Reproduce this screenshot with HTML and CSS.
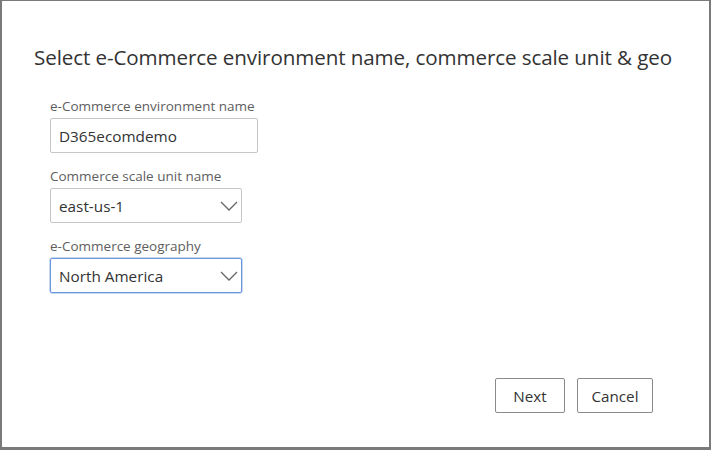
FILE: index.html
```html
<!DOCTYPE html>
<html>
<head>
<meta charset="utf-8">
<link rel="stylesheet" href="styles.css">
</head>
<body>
<div class="frame">
  <h1 class="title">Select e-Commerce environment name, commerce scale unit &amp; geo</h1>
  <div class="form">
    <div class="field">
      <label class="label">e-Commerce environment name</label>
      <div class="input wide">D365ecomdemo</div>
    </div>
    <div class="field">
      <label class="label">Commerce scale unit name</label>
      <div class="input select">
        <span>east-us-1</span>
        <svg class="chev" width="18" height="10" viewBox="0 0 18 10"><path d="M1 1 L9 9 L17 1" fill="none" stroke="#666" stroke-width="1.3"/></svg>
      </div>
    </div>
    <div class="field">
      <label class="label">e-Commerce geography</label>
      <div class="input select focused">
        <span>North America</span>
        <svg class="chev" width="18" height="10" viewBox="0 0 18 10"><path d="M1 1 L9 9 L17 1" fill="none" stroke="#666" stroke-width="1.3"/></svg>
      </div>
    </div>
  </div>
  <div class="actions">
    <button class="btn next">Next</button>
    <button class="btn cancel">Cancel</button>
  </div>
</div>
</body>
</html>
```
FILE: styles.css
```css
html, body {
  margin: 0;
  padding: 0;
  background: #fff;
}
body {
  width: 711px;
  height: 450px;
  overflow: hidden;
  font-family: "Open Sans", "Noto Sans", sans-serif;
}
.frame {
  box-sizing: border-box;
  width: 711px;
  height: 450px;
  border-top: 1px solid #7a7a7a;
  border-left: 2px solid #7a7a7a;
  border-right: 2px solid #7a7a7a;
  border-bottom: 3px solid #7a7a7a;
  display: flex;
  flex-direction: column;
  padding: 0 0 0 32px;
}
.title {
  margin: 42px 0 0 0;
  font-size: 20.6px;
  font-weight: 400;
  color: #333;
  line-height: 28px;
  letter-spacing: -0.1px;
}
.form {
  margin-top: 27px;
  padding-left: 16px;
  display: flex;
  flex-direction: column;
  gap: 15px;
}
.field {
  display: flex;
  flex-direction: column;
  gap: 3px;
}
.label {
  font-size: 13.5px;
  color: #5e5e5e;
  line-height: 17px;
  white-space: nowrap;
}
.input {
  box-sizing: border-box;
  width: 192px;
  height: 35px;
  border: 1px solid #c6c6c6;
  border-radius: 2px;
  padding: 0 3px 0 8px;
  font-size: 15.3px;
  color: #333;
  display: flex;
  align-items: center;
}
.input.wide {
  width: 208px;
}
.select {
  justify-content: space-between;
}
.focused {
  border: 1px solid #6a98de;
  box-shadow: 0 0 0 0.5px #8fb2e8;
}
.actions {
  margin-top: auto;
  margin-bottom: 34px;
  margin-right: 56px;
  display: flex;
  justify-content: flex-end;
  gap: 12px;
}
.btn {
  box-sizing: border-box;
  height: 35px;
  border: 1px solid #8a8a8a;
  border-radius: 2px;
  background: #fff;
  font-family: "Open Sans", "Noto Sans", sans-serif;
  font-size: 15.2px;
  color: #333;
  padding: 0;
}
.next {
  width: 70px;
}
.cancel {
  width: 76px;
}
```
